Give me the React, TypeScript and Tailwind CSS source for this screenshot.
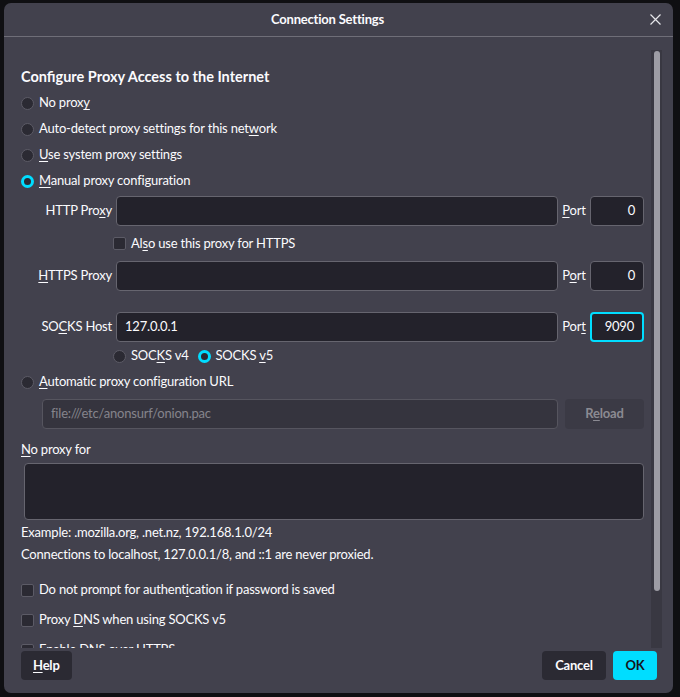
import React from "react";

const font = { fontFamily: "Lato, 'Noto Sans', sans-serif" };

const U = ({ children }: { children: React.ReactNode }) => (
  <span className="underline underline-offset-2">{children}</span>
);

const Radio = ({ checked = false }: { checked?: boolean }) =>
  checked ? (
    <span className="block w-[13px] h-[13px] rounded-full border-[3px] border-[#00ddff] bg-[#2b2a33] shrink-0" />
  ) : (
    <span className="block w-[13px] h-[13px] rounded-full border border-[#5c5b66] bg-[#2b2a33] shrink-0" />
  );

const Checkbox = () => (
  <span className="block w-[13px] h-[13px] rounded-[2px] border border-[#5c5b66] bg-[#2b2a33] shrink-0" />
);

const Input = ({ value = "", focused = false, right = false, className = "" }: { value?: string; focused?: boolean; right?: boolean; className?: string }) => (
  <div
    className={`h-[30px] rounded-[4px] bg-[#23222b] flex items-center px-2 text-[13px] text-[#fbfbfe] ${
      focused ? "border-2 border-[#00ddff]" : "border border-[#66656f]"
    } ${right ? "justify-end" : ""} ${className}`}
  >
    {value}
  </div>
);

const ProxyRow = ({ label, value, port, focused }: { label: React.ReactNode; value?: string; port: React.ReactNode; focused?: boolean }) => (
  <div className="flex items-center h-[30px]">
    <div className="w-[91px] text-right">{label}</div>
    <Input value={value} className="ml-[4px] flex-1" />
    <div className="w-[32px] text-center">{port}</div>
    <Input value={focused ? "9090" : "0"} right focused={focused} className="w-[54px]" />
  </div>
);

export default function App() {
  return (
    <div className="w-[680px] h-[697px] bg-[#0f0f12] pt-[3px] pl-[4px] text-[13px] tracking-[-0.2px] text-[#fbfbfe]" style={font}>
      <div className="w-[669px] h-[690px] rounded-[7px] bg-[#42414d] flex flex-col overflow-hidden">
        {/* Header */}
        <div className="h-[34px] shrink-0 border-b border-[#6f6e78] flex items-center relative">
          <div className="flex-1 text-center font-bold text-[13px] pr-[22px]">Connection Settings</div>
          <svg className="absolute right-[12px] top-[11px]" width="11" height="11" viewBox="0 0 11 11">
            <path d="M0.5 0.5 L10.5 10.5 M10.5 0.5 L0.5 10.5" stroke="#e6e6ea" strokeWidth="1.2" />
          </svg>
        </div>

        {/* Body */}
        <div className="flex h-[611px] shrink-0 overflow-hidden">
          <div className="w-[647px] pl-[17px] pr-[7px] pt-[27px]">
            <div className="h-[26px] flex items-center font-bold text-[14.5px] tracking-normal">Configure Proxy Access to the Internet</div>
            <div className="h-[26px] flex items-center gap-[5px]">
              <Radio />
              <span>No prox<U>y</U></span>
            </div>
            <div className="h-[26px] flex items-center gap-[5px]">
              <Radio />
              <span>Auto-detect proxy settings for this net<U>w</U>ork</span>
            </div>
            <div className="h-[26px] flex items-center gap-[5px]">
              <Radio />
              <span><U>U</U>se system proxy settings</span>
            </div>
            <div className="h-[26px] flex items-center gap-[5px]">
              <Radio checked />
              <span><U>M</U>anual proxy configuration</span>
            </div>

            <div className="mt-[2px]">
              <ProxyRow label={<>HTTP Pro<U>x</U>y</>} port={<><U>P</U>ort</>} />
            </div>
            <div className="h-[35px] flex items-center gap-[5px] pl-[92px]">
              <Checkbox />
              <span>Al<U>s</U>o use this proxy for HTTPS</span>
            </div>
            <ProxyRow label={<><U>H</U>TTPS Proxy</>} port={<>P<U>o</U>rt</>} />
            <div className="mt-[21px]">
              <ProxyRow label={<>SO<U>C</U>KS Host</>} value="127.0.0.1" port={<>Por<U>t</U></>} focused />
            </div>
            <div className="mt-[1px] h-[26px] flex items-center pl-[92px]">
              <Radio />
              <span className="ml-[5px]">SOC<U>K</U>S v4</span>
              <span className="ml-[9px]"><Radio checked /></span>
              <span className="ml-[5px]">SOCKS <U>v</U>5</span>
            </div>
            <div className="h-[26px] flex items-center gap-[5px]">
              <Radio />
              <span><U>A</U>utomatic proxy configuration URL</span>
            </div>
            <div className="mt-[4px] flex items-center h-[30px] pl-[21px]">
              <div className="flex-1 h-[30px] rounded-[4px] bg-[#35343e] border border-[#56555f] flex items-center px-2 text-[#85848c]">
                file:///etc/anonsurf/onion.pac
              </div>
              <div className="ml-[7px] w-[79px] h-[30px] rounded-[4px] bg-[#3b3a45] flex items-center justify-center font-bold text-[#8b8a92]">
                <span>R<U>e</U>load</span>
              </div>
            </div>
            <div className="mt-[8px] h-[26px] flex items-center"><span><U>N</U>o proxy for</span></div>
            <div className="ml-[3px] h-[57px] rounded-[4px] bg-[#23222b] border border-[#66656f]" />
            <div className="mt-[2px] h-[22px] flex items-center">Example: .mozilla.org, .net.nz, 192.168.1.0/24</div>
            <div className="h-[22px] flex items-center">Connections to localhost, 127.0.0.1/8, and ::1 are never proxied.</div>
            <div className="mt-[9px] h-[30px] flex items-center gap-[5px]">
              <Checkbox />
              <span>Do not prompt for authent<U>i</U>cation if password is saved</span>
            </div>
            <div className="h-[30px] flex items-center gap-[5px]">
              <Checkbox />
              <span>Proxy <U>D</U>NS when using SOCKS v5</span>
            </div>
            <div className="h-[30px] flex items-center gap-[5px]">
              <Checkbox />
              <span>Enable DNS over HTTPS</span>
            </div>
          </div>
          {/* Scrollbar */}
          <div className="w-[11px] mt-[13px] bg-[#393842] flex justify-center">
            <div className="w-[6px] h-[540px] mt-[1px] rounded-full bg-[#9d9ca4]" />
          </div>
        </div>

        {/* Footer */}
        <div className="flex items-start pl-[17px] pr-[16px] pt-[3px]">
          <div className="h-[29px] px-[12px] rounded-[4px] bg-[#2b2a33] flex items-center font-bold"><span><U>H</U>elp</span></div>
          <div className="flex-1" />
          <div className="h-[29px] w-[64px] rounded-[4px] bg-[#2b2a33] flex items-center justify-center font-bold">Cancel</div>
          <div className="ml-[7px] h-[29px] w-[44px] rounded-[4px] bg-[#00ddff] text-[#15141a] flex items-center justify-center font-bold">OK</div>
        </div>
      </div>
    </div>
  );
}
